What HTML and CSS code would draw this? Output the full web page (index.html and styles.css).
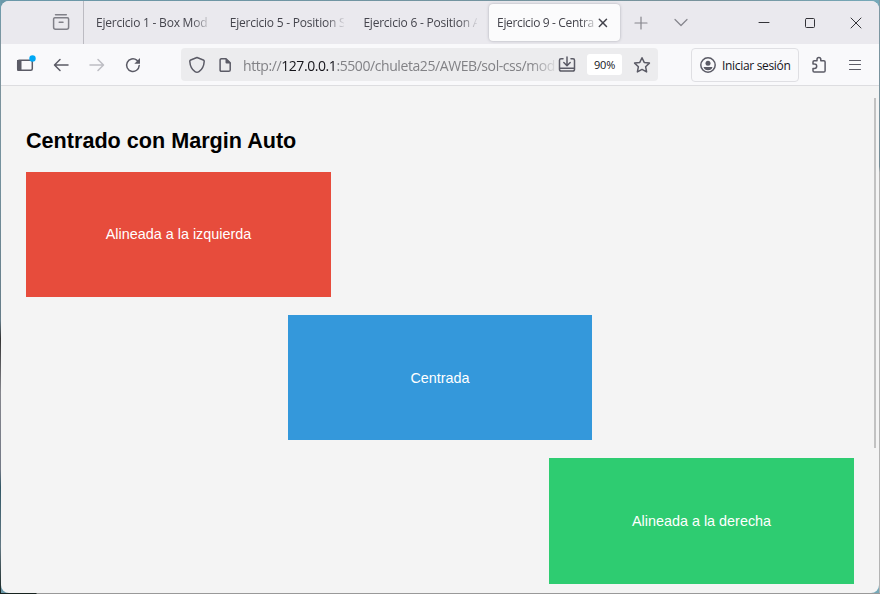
FILE: index.html
```html
<!DOCTYPE html>
<html lang="es">
<head>
<meta charset="utf-8">
<title>Ejercicio 9 - Centrado</title>
<link rel="stylesheet" href="styles.css">
</head>
<body>
<div class="window">
  <header class="tabs">
    <div class="view"><svg width="18" height="18" viewBox="0 0 18 18"><path d="M3.500 1.700h10.800M2.600 4.700h12.800q1.200 0 1.200 1.200v8.300q0 2-2 2H3.600q-2 0-2-2V5.900q0-1.200 1.200-1.200zM7.200 9.200h3.800"/></svg></div>
    <div class="tab"><span class="label">Ejercicio 1 - Box Mod</span></div>
    <div class="tab"><span class="label">Ejercicio 5 - Position S</span></div>
    <div class="tab"><span class="label">Ejercicio 6 - Position A</span></div>
    <div class="tab active"><span class="label">Ejercicio 9 - Centra</span><svg class="close" width="10" height="10" viewBox="0 0 10 10"><path d="M1.300 1.300l7.200 7.200M8.500 1.300L1.300 8.500"/></svg></div>
    <svg class="plus" width="14" height="14" viewBox="0 0 14 14"><path d="M7 1v12M1 7h12"/></svg>
    <svg class="chevron" width="14" height="10" viewBox="0 0 14 10"><path d="M1 1.500l6 6 6-6"/></svg>
    <div class="controls">
      <svg width="12" height="12" viewBox="0 0 12 12"><path d="M1 5.500h10"/></svg>
      <svg width="12" height="12" viewBox="0 0 12 12"><rect x="1.500" y="1.500" width="9" height="9" rx="1"/></svg>
      <svg width="12" height="12" viewBox="0 0 12 12"><path d="M1 1l10 10M11 1L1 11"/></svg>
    </div>
  </header>
  <nav class="toolbar">
    <svg class="sidebar" width="20" height="18" viewBox="0 0 20 18"><rect x="1.700" y="5.200" width="14.600" height="10" rx="1.500"/><path class="fill" d="M1 5h4.500v11H2.500Q1 16 1 14.500z"/><circle cx="16.500" cy="3.500" r="3.200"/></svg>
    <svg class="back" width="16" height="14" viewBox="0 0 16 14"><path d="M15 7H1.800M7 1.500L1.500 7 7 12.500"/></svg>
    <svg class="forward" width="16" height="14" viewBox="0 0 16 14"><path d="M1 7h13.200M9 1.500L14.500 7 9 12.500"/></svg>
    <svg class="reload" width="16" height="16" viewBox="0 0 16 16"><path d="M14.200 8.500A6.300 6.300 0 1 1 11.800 3.200L14 5.300"/><path class="fill" d="M15 1v5.700H9.300z"/></svg>
    <div class="address">
      <svg class="shield" width="16" height="18" viewBox="0 0 16 18"><path d="M8 1.500L14.300 4q1 .4.900 1.500-.5 7-5.200 10.200-2 1.300-4 0Q1.300 12.500.8 5.500.7 4.400 1.700 4z"/></svg>
      <svg class="page" width="12" height="16" viewBox="0 0 12 16"><path d="M2.500 1.700H7l4.200 4.200v7q0 1.400-1.400 1.400H2.500q-1.400 0-1.400-1.400V3.100q0-1.400 1.400-1.400z"/><path class="fill" d="M6.500 1l5.500 5.500H7.500q-1 0-1-1z"/></svg>
      <span class="url">http://<b>127.0.0.1</b>:5500/chuleta25/AWEB/sol-css/mod</span>
      <svg class="install" width="18" height="18" viewBox="0 0 18 18"><path d="M5 2.700H3q-1.500 0-1.500 1.500v9Q1.500 15 3.200 15h11.600q1.700 0 1.700-1.800v-9q0-1.500-1.500-1.500h-2M9 1v8.500M5.800 6.500L9 9.700l3.200-3.200M2 12.300h14"/></svg>
      <span class="zoom">90%</span>
      <svg class="star" width="18" height="18" viewBox="0 0 18 18"><path d="M9 1.700l2.200 4.700 5.200.7-3.800 3.600 1 5.200L9 13.400 4.400 15.900l1-5.200L1.600 7.100l5.200-.7z"/></svg>
    </div>
    <div class="account">
      <svg width="16" height="16" viewBox="0 0 16 16"><circle cx="8" cy="8" r="7.200"/><circle class="fill" cx="8" cy="6.200" r="2.500"/><path class="fill" d="M3.500 10h9Q11.500 13.300 8 13.300T3.500 10z"/></svg>
      <span>Iniciar sesión</span>
    </div>
    <svg class="puzzle" width="16" height="18" viewBox="0 0 16 18"><path d="M2 8V6q0-1.300 1.300-1.300H6V3.500a1.900 1.900 0 0 1 3.800 0v1.200h3q1.300 0 1.300 1.300v8.700q0 1.300-1.300 1.300H3.300Q2 16 2 14.700V12.500h1.500a2.200 2.200 0 0 0 0-4.400z"/></svg>
    <svg class="menu" width="14" height="12" viewBox="0 0 14 12"><path d="M1.500 1.500h11M1.500 5.500h11M1.500 10.500h11"/></svg>
  </nav>
  <main class="content">
    <h1>Centrado con Margin Auto</h1>
    <div class="box left">Alineada a la izquierda</div>
    <div class="box center">Centrada</div>
    <div class="box right">Alineada a la derecha</div>
    <div class="scrollbar"></div>
  </main>
</div>
</body>
</html>
```
FILE: styles.css
```css
* { box-sizing: border-box; }
body {
  margin: 0;
  height: 594px;
  padding: 1px;
  overflow: hidden;
  background:
    linear-gradient(#6b9daf, #80939c 8%, #75929e 28%, #657c88 54%, #333 57%, #85868d 66%, #737986 79%, #315766 82%, #637984 92%, #15221f) 0 0 / 1px 100% no-repeat,
    linear-gradient(90deg, #17231f 36px, #999 37px) 0 100% / 100% 1px no-repeat,
    linear-gradient(#7e99a4, #748c96 28%, #b4b4b4 29%) 100% 0 / 1px 100% no-repeat,
    linear-gradient(90deg, #6a98a9, #78929b 80%, #75a9b9);
  font-family: "Open Sans", "Noto Sans", sans-serif;
}
svg { display: block; flex: none; fill: none; stroke: #5b5b66; stroke-width: 1.5; stroke-linecap: round; stroke-linejoin: round; }
svg .fill { fill: #5b5b66; stroke: none; }
.window { width: 878px; height: 592px; border-radius: 8px; overflow: hidden; background: #f4f4f4; display: flex; flex-direction: column; }

.tabs { height: 43px; flex: none; background: #eae9ee; display: flex; align-items: center; }
.view { width: 83px; height: 43px; padding: 12px 0 0 51px; border-right: 1px solid #bcbbc2; }
.view svg { stroke: #808088; }
.tab { width: 133.700px; padding-left: 12px; font-size: 12px; line-height: 20px; color: #45454d; flex: none; }
.label { display: block; width: 114px; white-space: nowrap; letter-spacing: -.22px; mask-image: linear-gradient(90deg, #000 84%, rgba(0, 0, 0, .1)); }
.tab.active { width: 131px; height: 37px; margin-left: 4px; padding-left: 8px; background: #fbfbfc; border-radius: 4px; box-shadow: 0 0 3px #aaaab3; display: flex; align-items: center; }
.active .label { width: 100px; flex: none; letter-spacing: -.35px; }
.close { margin-left: 1px; stroke: #45454d; }
.plus { margin-left: 14px; stroke: #85858c; stroke-width: 1.200; }
.chevron { margin-left: 26px; stroke: #85858c; stroke-width: 1.200; }
.controls { display: flex; gap: 34px; margin-left: 70px; }
.controls svg { stroke: #333338; stroke-width: 1; }

.toolbar { height: 42px; flex: none; background: #f9f9fb; border-bottom: 1px solid #dddde0; display: flex; align-items: center; }
.sidebar { margin: -2px 0 0 15px; }
.sidebar circle { fill: #00a8f5; stroke: none; }
.back { margin-left: 17px; }
.forward { margin-left: 20px; stroke: #bdbdc3; }
.reload { margin-left: 20px; }
.address { width: 477px; height: 33px; margin-left: 40px; padding-left: 8px; background: #ececee; border-radius: 4px; display: flex; align-items: center; }
.page { margin-left: 14px; }
.url { width: 312px; margin-left: 12px; padding-top: 2px; white-space: nowrap; font-size: 14px; line-height: 24px; color: #828286; letter-spacing: -.42px; mask-image: linear-gradient(90deg, #000 92%, rgba(0, 0, 0, .15)); }
.url b { font-weight: 400; color: #15141a; }
.install { margin-left: 3px; }
.zoom { width: 35px; height: 21px; margin: 0 11px 0 11px; background: #fff; border-radius: 3px; font-size: 11px; line-height: 22px; letter-spacing: -.2px; text-align: center; color: #15141a; }
.account { width: 108px; height: 34px; margin-left: 33px; padding-left: 8px; border: 1px solid #dfdfe3; border-radius: 4px; display: flex; align-items: center; gap: 6px; font-size: 12px; color: #15141a; letter-spacing: -.32px; white-space: nowrap; }
.account span { padding-top: 1px; }
.puzzle { margin-left: 12px; }
.menu { margin-left: 21px; stroke-width: 1.200; }

.content { position: relative; flex: 1; padding: 42px 25px 0; font-family: "Liberation Sans", Arial, sans-serif; }
h1 { margin: 0 0 19px; font-size: 21.600px; line-height: 25px; color: #000; }
.box { width: 305px; height: 125px; margin-bottom: 18px; display: flex; align-items: center; justify-content: center; color: #fff; font-size: 14.400px; }
.left { margin-right: auto; padding-bottom: 1px; background: #e74c3c; }
.center { width: 304px; margin-left: auto; margin-right: auto; background: #3498db; }
.right { height: 126px; margin-left: auto; background: #2ecc71; }
.scrollbar { position: absolute; top: 12px; right: 3px; width: 2px; height: 350px; background: #c2c2c2; }
```
